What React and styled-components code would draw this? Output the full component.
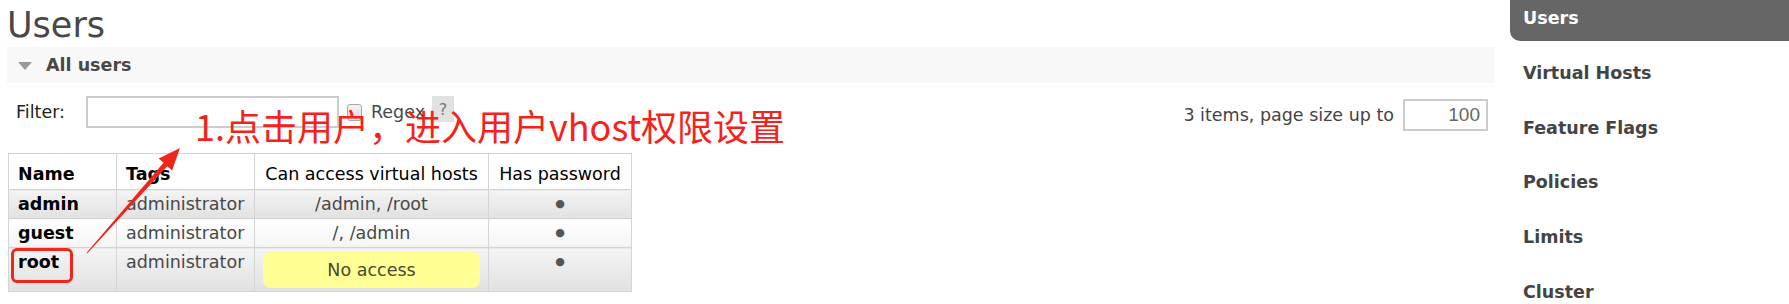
import React from 'react'
import styled, { createGlobalStyle } from 'styled-components'

const GlobalStyle = createGlobalStyle`
  html, body {
    margin: 0;
    padding: 0;
    background: #fff;
  }
  body {
    font-family: "DejaVu Sans", Verdana, sans-serif;
    font-size: 17.5px;
    color: #484848;
  }
`

const users = [
    { name: 'admin', tags: 'administrator', vhosts: '/admin, /root', password: true },
    { name: 'guest', tags: 'administrator', vhosts: '/, /admin', password: true },
    { name: 'root', tags: 'administrator', vhosts: null, password: true },
]

const navItems = ['Users', 'Virtual Hosts', 'Feature Flags', 'Policies', 'Limits', 'Cluster']

const Page = styled.div`
  position: relative;
  display: flex;
  width: 1789px;
  height: 304px;
  overflow: hidden;
`

const Main = styled.div`
  width: 1488px;
  margin-left: 7px;
`

const Title = styled.h1`
  margin: 5px 0 1px 0;
  font-size: 35px;
  line-height: 41px;
  font-weight: normal;
  color: #484848;
`

const SectionHeader = styled.div`
  display: flex;
  align-items: center;
  height: 36px;
  padding-left: 11px;
  background: #f8f8f8;
`

const Triangle = styled.span`
  width: 0;
  height: 0;
  border-left: 7.5px solid transparent;
  border-right: 7.5px solid transparent;
  border-top: 8px solid #999;
  margin-right: 14px;
  margin-top: 1px;
`

const SectionTitle = styled.h2`
  margin: 0;
  font-size: 17.5px;
  font-weight: bold;
  color: #484848;
`

const FilterRow = styled.div`
  display: flex;
  justify-content: space-between;
  align-items: flex-start;
  margin-top: 13px;
  padding-left: 9px;
`

const FilterGroup = styled.div`
  display: flex;
  align-items: center;
`

const Label = styled.span`
  color: #222;
  margin-right: 21px;
`

const TextInput = styled.div`
  box-sizing: border-box;
  flex-shrink: 0;
  width: ${p => p.$width}px;
  height: 32px;
  border: 2px solid #ccc;
  background: #fff;
  text-align: right;
  padding-right: 6px;
  font-family: "Liberation Sans", Arial, sans-serif;
  font-size: 19px;
  line-height: 28px;
  color: #666;
`

const CheckBox = styled.span`
  box-sizing: border-box;
  flex-shrink: 0;
  width: 15px;
  height: 17px;
  margin-left: 8px;
  margin-right: 9px;
  border: 1px solid #a8a8a8;
  border-radius: 3px;
  background: linear-gradient(#f4f4f4, #dcdcdc);
`

const HelpBox = styled.span`
  display: inline-flex;
  flex-shrink: 0;
  align-items: center;
  justify-content: center;
  width: 22px;
  min-width: 22px;
  height: 26px;
  margin-left: 7px;
  margin-top: -6px;
  background: #e2e2e2;
  color: #777;
  font-size: 16px;
`

const PagingGroup = styled.div`
  display: flex;
  align-items: center;
  margin-top: 3px;
  margin-right: 7px;
  color: #444;
`

const PagingText = styled.span`
  margin-right: 9px;
`

const Table = styled.table`
  margin-top: 22px;
  margin-left: 1px;
  border-collapse: collapse;
  table-layout: fixed;
  width: 623px;
`

const Th = styled.th`
  box-sizing: border-box;
  width: ${p => p.$width}px;
  padding: 10px 9px 4px;
  line-height: 21px;
  border: 1px solid #d4d4d4;
  background: #fff;
  color: #000;
  font-weight: ${p => (p.$bold ? 'bold' : 'normal')};
  text-align: ${p => (p.$center ? 'center' : 'left')};
  white-space: nowrap;
`

const Tr = styled.tr`
  & > td {
    background: ${p => (p.$alt ? 'linear-gradient(#f4f4f4, #e1e1e1)' : 'linear-gradient(#fff, #f4f4f4)')};
  }
`

const Td = styled.td`
  padding: 4px 9px 4px;
  line-height: 20px;
  vertical-align: top;
  border: 1px solid #d4d4d4;
  color: ${p => (p.$strong ? '#000' : '#484848')};
  font-weight: ${p => (p.$strong ? 'bold' : 'normal')};
  text-align: ${p => (p.$center ? 'center' : 'left')};
  white-space: nowrap;
`

const NoAccess = styled.div`
  margin: 0 -1px -1px;
  height: 36px;
  line-height: 36px;
  border-radius: 8px;
  background: #ffff96;
  color: #4a4a30;
  text-align: center;
`

const Dot = styled.span`
  display: inline-block;
  vertical-align: top;
  height: 20px;
  font-size: 11px;
  line-height: 20px;
  color: #555;
`

const Sidebar = styled.nav`
  width: 279px;
  margin-left: 15px;
`

const NavItem = styled.div`
  box-sizing: border-box;
  height: 41px;
  margin-bottom: 13.8px;
  padding: 8px 12px 12px 13px;
  line-height: 21px;
  font-weight: bold;
  color: ${p => (p.$active ? '#fff' : '#444')};
  background: ${p => (p.$active ? '#666' : 'transparent')};
  border-bottom-left-radius: 10px;
`

const Annotation = styled.span`
  position: absolute;
  left: 195px;
  top: 107px;
  font-family: "Noto Sans CJK SC", "Noto Sans", sans-serif;
  font-size: 36px;
  line-height: 36px;
  color: #f5221b;
  white-space: nowrap;
`

const Marker = styled.span`
  position: absolute;
  left: 11px;
  top: 248px;
  width: 62px;
  height: 35px;
  box-sizing: border-box;
  border: 3.5px solid #f0261c;
  border-radius: 6px;
`

const ArrowSvg = styled.svg`
  position: absolute;
  left: 80px;
  top: 140px;
  width: 110px;
  height: 120px;
`

const App = () => {
    return <>
        <GlobalStyle />
        <Page>
            <Main>
                <Title>Users</Title>
                <SectionHeader>
                    <Triangle />
                    <SectionTitle>All users</SectionTitle>
                </SectionHeader>

                <FilterRow>
                    <FilterGroup>
                        <Label>Filter:</Label>
                        <TextInput $width={253} />
                        <CheckBox />
                        <span>Regex</span>
                        <HelpBox>?</HelpBox>
                    </FilterGroup>
                    <PagingGroup>
                        <PagingText>3 items, page size up to</PagingText>
                        <TextInput $width={85}>100</TextInput>
                    </PagingGroup>
                </FilterRow>

                <Table>
                    <thead>
                        <tr>
                            <Th $width={108} $bold>Name</Th>
                            <Th $width={138} $bold>Tags</Th>
                            <Th $width={234} $center>Can access virtual hosts</Th>
                            <Th $width={143} $center>Has password</Th>
                        </tr>
                    </thead>
                    <tbody>
                        {users.map((u, i) => (
                            <Tr key={u.name} $alt={i % 2 === 0}>
                                <Td $strong>{u.name}</Td>
                                <Td>{u.tags}</Td>
                                <Td $center>
                                    {u.vhosts ? u.vhosts : <NoAccess>No access</NoAccess>}
                                </Td>
                                <Td $center>{u.password && <Dot>●</Dot>}</Td>
                            </Tr>
                        ))}
                    </tbody>
                </Table>
            </Main>

            <Sidebar>
                {navItems.map(item => (
                    <NavItem key={item} $active={item === 'Users'}>{item}</NavItem>
                ))}
            </Sidebar>

            {/* annotations drawn over the screenshot */}
            <Marker />
            <ArrowSvg viewBox="0 0 110 120">
                <polygon
                    points="6.6,112.7 83.5,22.8 78.7,18.5 100,8 92.1,30.5 87.3,26.2 7.4,113.3"
                    fill="#f0261c"
                />
            </ArrowSvg>
            <Annotation>1.点击用户，进入用户vhost权限设置</Annotation>
        </Page>
    </>
}

export default App
